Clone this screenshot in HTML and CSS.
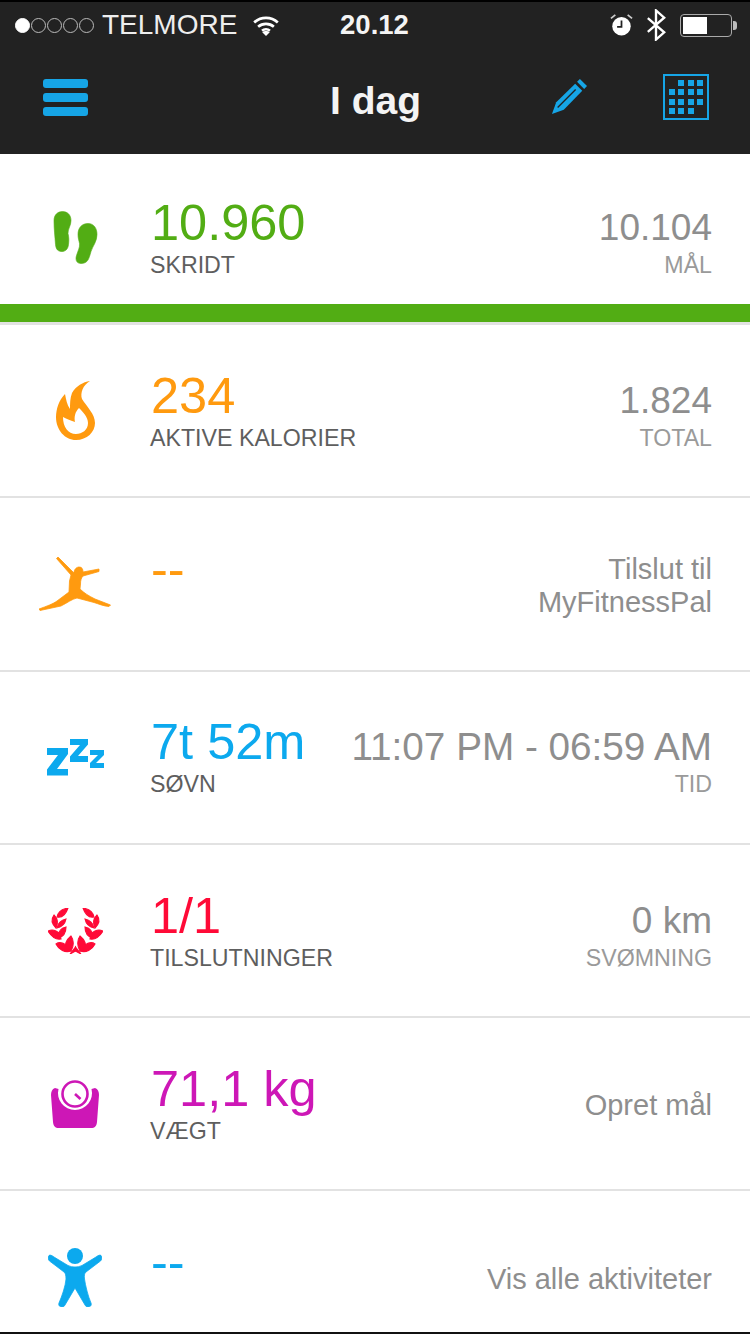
FILE: index.html
```html
<!DOCTYPE html>
<html>
<head>
    <meta charset="utf-8">
    <title>I dag</title>
    <link rel="stylesheet" href="styles.css">
</head>
<body>
    <header class="top">
        <div class="status">
            <div class="status_left">
                <span class="dots"><i class="on"></i><i></i><i></i><i></i><i></i></span>
                <span class="carrier">TELMORE</span>
                <svg class="wifi" width="28" height="21" viewBox="0 0 30 24"><path d="M1.500 8.500C9 1.500 21 1.500 28.500 8.500M6 13.500C11 9 19 9 24 13.500M10.500 18C13 15.800 17 15.800 19.500 18" fill="none" stroke="#fff" stroke-width="3"/><path d="M15 24l-4.300-4.300C13 17.700 17 17.700 19.300 19.700z" fill="#fff"/></svg>
            </div>
            <span class="clock">20.12</span>
            <div class="status_right">
                <svg width="23" height="22" viewBox="0 0 26 25"><circle cx="13" cy="14" r="10.500" fill="#fff"/><path d="M13 7.500v7h-5" fill="none" stroke="#222" stroke-width="2"/><path d="M1 5l5-4M25 5l-5-4" stroke="#ccc" stroke-width="2"/></svg>
                <svg width="20" height="32" viewBox="0 0 22 34"><path d="M2 9.500l18 15.500-9 8v-32l9 8-18 15.500" fill="none" stroke="#fff" stroke-width="2.600"/></svg>
                <span class="battery"><span class="battery_fill"></span></span>
            </div>
        </div>
        <nav class="nav">
            <div class="burger"><i></i><i></i><i></i></div>
            <h1 class="title">I dag</h1>
            <svg class="pencil" width="36" height="36" viewBox="0 0 38 38"><path d="M1 37l4.500-12.500L25.500 5l7.500 7.500L13.500 32.500z" fill="#16a5e6"/><path d="M27.500 3l3-3 7.500 7.500-3 3z" fill="#16a5e6"/><path d="M7 30L26 11" stroke="#222" stroke-width="1.400"/></svg>
            <div class="calendar">
                <i class="gap"></i><i></i><i></i><i></i>
                <i></i><i></i><i></i><i></i>
                <i></i><i></i><i></i><i></i>
                <i></i><i></i><i></i><i class="gap"></i>
            </div>
        </nav>
    </header>

    <main>
        <section class="row row_first">
            <div class="icon">
                <svg width="45" height="53" viewBox="0 0 45 52"><path d="M1 9C1 3 5 0 9.500 0 14 0 18 3 18 9 18 14 15 17 15 22 16 26 16 29 15.500 33 15 38 12 40 9 40 5 40 3 38 2.500 33 2 25 1 18 1 9z" fill="#52ad14" stroke="#52ad14" stroke-width=".6"/><path d="M25 23C25 16 29 12 35 12 41 12 44 17 44 23 44 30 40 34 38 40 36 47 35 52 28 52 24 52 22 49 23.500 44 25 39 27 36 26.500 32 26 29 25 27 25 23z" fill="#52ad14" stroke="#52ad14" stroke-width=".6"/></svg>
            </div>
            <div class="main">
                <div class="value green">10.960</div>
                <div class="label">SKRIDT</div>
            </div>
            <div class="side">
                <div class="side_value">10.104</div>
                <div class="side_label">MÅL</div>
            </div>
        </section>
        <div class="progress"></div>

        <section class="row">
            <div class="icon">
                <svg width="39" height="59" viewBox="0 0 39 59"><path fill-rule="evenodd" d="M34 0C27 1 20 5 16 12 14 17 14 23 14 28 11 24 10 18 9 13 3 19 0 28 0 36 0 49 9 59 20 59 31 59 39 51 39 42 39 33 31 26 26 18 24 12 27 4 34 0zM7 36C10 38 14 39 19 41 18 36 19 31 23 27 27 31 32 36 32 42 32 49 26 53 20 53 12 53 7 46 7 36z" fill="#ff9a0f"/></svg>
            </div>
            <div class="main">
                <div class="value orange">234</div>
                <div class="label">AKTIVE KALORIER</div>
            </div>
            <div class="side">
                <div class="side_value">1.824</div>
                <div class="side_label">TOTAL</div>
            </div>
        </section>

        <section class="row">
            <div class="icon">
                <svg width="72" height="54" viewBox="0 0 72 54"><path d="M19 0L35 16C35 12 38 10 40 10 43 10 44 12 44 15L60 12 60 14.500 44 19C42 21 41.500 24 41.500 27L41 32C45 36 50 39 56 42L71.500 48 70 49.500C64 49 60 47 55 45.500L38 41C33 42 28 46 22 49L1 53.500 0 52C8 49 14 47 18 44L30 35 30.500 24 32 18 17.500 1.500z" fill="#ff9a0f" stroke="#ff9a0f" stroke-width=".8"/></svg>
            </div>
            <div class="main">
                <div class="value orange">--</div>
            </div>
            <div class="side side_text">
                Tilslut til<br>MyFitnessPal
            </div>
        </section>

        <section class="row">
            <div class="icon">
                <svg width="57" height="37" viewBox="0 0 57 37"><path d="M0 9h21v6L10 30h11v6.500H0v-6L11 16H0z" fill="#0ca9ee"/><path d="M23 0h18v5.500L31 17h10v6H23v-5.500L33 6H23z" fill="#0ca9ee"/><path d="M43 11h14v5l-8 8h8v5H43v-5l8-8h-8z" fill="#0ca9ee"/></svg>
            </div>
            <div class="main">
                <div class="value blue">7t 52m</div>
                <div class="label">SØVN</div>
            </div>
            <div class="side">
                <div class="side_value side_time">11:07 PM - 06:59 AM</div>
                <div class="side_label">TID</div>
            </div>
        </section>

        <section class="row">
            <div class="icon">
                <svg width="55" height="46" viewBox="0 0 55 46" fill="#ff0a37" stroke="#ff0a37" stroke-width="1.100">
                    <g id="laurel">
                        <path d="M20 0C14 1 10 4 9 9 14 10 18 6 20 0z"/>
                        <path d="M6 7C3 11 4 16 8 20 10 16 10 11 6 7z"/>
                        <path d="M18 11C13 12 10 15 9 20 14 19 17 16 18 11z"/>
                        <path d="M0 23C4 21 8 22 12 26L13 31C7 32 3 28 0 23z"/>
                        <path d="M18 19C13 20 10 24 10 30 15 29 18 25 18 19z"/>
                        <path d="M8 36C12 33 18 35 23 43 17 45 11 42 8 36z"/>
                        <path d="M23 28C18 32 16 37 19 41L23 43C26 38 26 32 23 28z"/>
                        <path d="M22 46L27.500 39 27.500 43C26 44 24 45 22 46z"/>
                    </g>
                    <use href="#laurel" transform="matrix(-1 0 0 1 55 0)"/>
                </svg>
            </div>
            <div class="main">
                <div class="value red">1/1</div>
                <div class="label">TILSLUTNINGER</div>
            </div>
            <div class="side">
                <div class="side_value">0 km</div>
                <div class="side_label">SVØMNING</div>
            </div>
        </section>

        <section class="row">
            <div class="icon">
                <svg width="48" height="48" viewBox="0 0 48 48"><path d="M4 8C1 9 0 12 0 15L2 42C2.500 46 4 48 8 48H40C44 48 45.500 46 46 42L48 15C48 12 47 9 44 8L40.500 9A17 17 0 1 1 7.500 9z" fill="#cd17b6"/><circle cx="24" cy="14" r="12.500" fill="none" stroke="#cd17b6" stroke-width="2.600"/><path d="M24 14l5.500 5" stroke="#cd17b6" stroke-width="2.600"/></svg>
            </div>
            <div class="main">
                <div class="value purple">71,1 kg</div>
                <div class="label">VÆGT</div>
            </div>
            <div class="side side_text">Opret mål</div>
        </section>

        <section class="row">
            <div class="icon">
                <svg width="54" height="59" viewBox="0 0 54 59"><circle cx="27" cy="8" r="8" fill="#0ca9ee"/><path d="M1 7.500C2 6.500 4 7.500 6 9L20 17.500C24 19.500 30 19.500 34 17.500L48 9C50 7.500 52 6.500 53 7.500 54.500 9 54 11.500 52.500 13L38 24C36.500 25 36 28 36.500 31 37.500 38 40 48 43 55 44 57.500 42 59 40 59 38.500 59 37.500 58 37 57L27 40 17 57C16.500 58 15.500 59 14 59 12 59 10 57.500 11 55 14 48 17.500 38 18 31 18 28 17.500 25 16 24L1.500 13C0 11.500-.5 9 1 7.500z" fill="#0ca9ee" stroke="#0ca9ee" stroke-width=".8"/></svg>
            </div>
            <div class="main">
                <div class="value blue">--</div>
            </div>
            <div class="side side_text">Vis alle aktiviteter</div>
        </section>
    </main>
</body>
</html>
```

FILE: styles.css
```css
*{
    box-sizing: border-box;
}
html{
    background: #FFF;
}
body{
    width: 750px;
    height: 1334px;
    margin: 0;
    overflow: hidden;
    font-family: 'Liberation Sans', sans-serif;
    border-bottom: 2px solid #111;
}
.top{
    height: 154px;
    background: #222;
    border-top: 2px solid #000;
    color: #FFF;
}
.status{
    display: flex;
    align-items: center;
    justify-content: space-between;
    height: 46px;
    padding: 0 18px 0 15px;
}
.status_left, .status_right{
    display: flex;
    align-items: center;
    width: 270px;
}
.status_right{
    justify-content: flex-end;
    gap: 13px;
}
.dots{
    display: flex;
    gap: 1px;
}
.dots i{
    width: 15px;
    height: 15px;
    border: 1px solid #BBB;
    border-radius: 50%;
}
.dots .on{
    background: #FFF;
    border-color: #FFF;
}
.carrier{
    margin-left: 8px;
    font-size: 28px;
    color: #EEE;
}
.wifi{
    margin-left: 15px;
}
.clock{
    font-size: 27.5px;
    font-weight: bold;
    color: #F4F4F4;
    margin-left: 2px;
}
.battery{
    display: block;
    position: relative;
    width: 52px;
    height: 23px;
    margin-left: 1px;
    padding: 2px;
    border: 1px solid #AAA;
    border-radius: 4px;
}
.battery::after{
    content: "";
    position: absolute;
    top: 6px;
    right: -6px;
    width: 4px;
    height: 9px;
    background: #BBB;
    border-radius: 0 3px 3px 0;
}
.battery_fill{
    display: block;
    width: 24px;
    height: 100%;
    background: #FFF;
}
.nav{
    display: flex;
    align-items: center;
    height: 106px;
    padding: 0 41px 8px 43px;
}
.burger{
    display: flex;
    flex-direction: column;
    gap: 5px;
    width: 45px;
}
.burger i{
    height: 9px;
    background: #16a5e6;
    border-radius: 3px;
}
.title{
    margin: 8px 0 0 242px;
    width: 221px;
    font-size: 39px;
    font-weight: bold;
    color: #F4F4F4;
}
.pencil{
    flex: none;
}
.calendar{
    flex: none;
    display: grid;
    grid-template-columns: repeat(4, 6px);
    grid-auto-rows: 6px;
    gap: 3.400px;
    align-content: center;
    justify-content: center;
    width: 46px;
    height: 46px;
    margin-left: 76px;
    border: 2px solid #16a5e6;
}
.calendar i{
    background: #16a5e6;
}
.calendar .gap{
    background: none;
}
.row{
    display: flex;
    align-items: center;
    height: 173.3px;
    padding-right: 38px;
    border-bottom: 2px solid #E2E2E2;
}
.row_first{
    height: 150px;
    padding-top: 17px;
    border-bottom: 0;
}
.progress{
    height: 21px;
    background: #52ad14;
    border-bottom: 3px solid #E2E2E2;
}
.icon{
    flex: none;
    display: flex;
    align-items: center;
    justify-content: center;
    width: 150px;
}
.main{
    flex: 1;
    min-height: 80px;
    white-space: nowrap;
}
.value{
    margin-left: 1px;
    padding-bottom: 4px;
    font-size: 50.5px;
    line-height: 50px;
}
.green{ color: #52ad14; }
.orange{ color: #ff9a0f; }
.blue{ color: #0ca9ee; }
.red{ color: #ff0a37; }
.purple{ color: #cd17b6; }
.label, .side_label{
    font-size: 23.200px;
    line-height: 26px;
}
.label{
    color: #5E5E5E;
}
.side{
    text-align: right;
    white-space: nowrap;
    color: #8E8E8E;
    padding-top: 6px;
}
.side_value{
    font-size: 37px;
    line-height: 48px;
}
.side_time{
    font-size: 38.700px;
}
.side_label{
    color: #9A9A9A;
}
.side_text{
    padding-top: 4px;
    font-size: 29px;
    line-height: 33px;
}
```
